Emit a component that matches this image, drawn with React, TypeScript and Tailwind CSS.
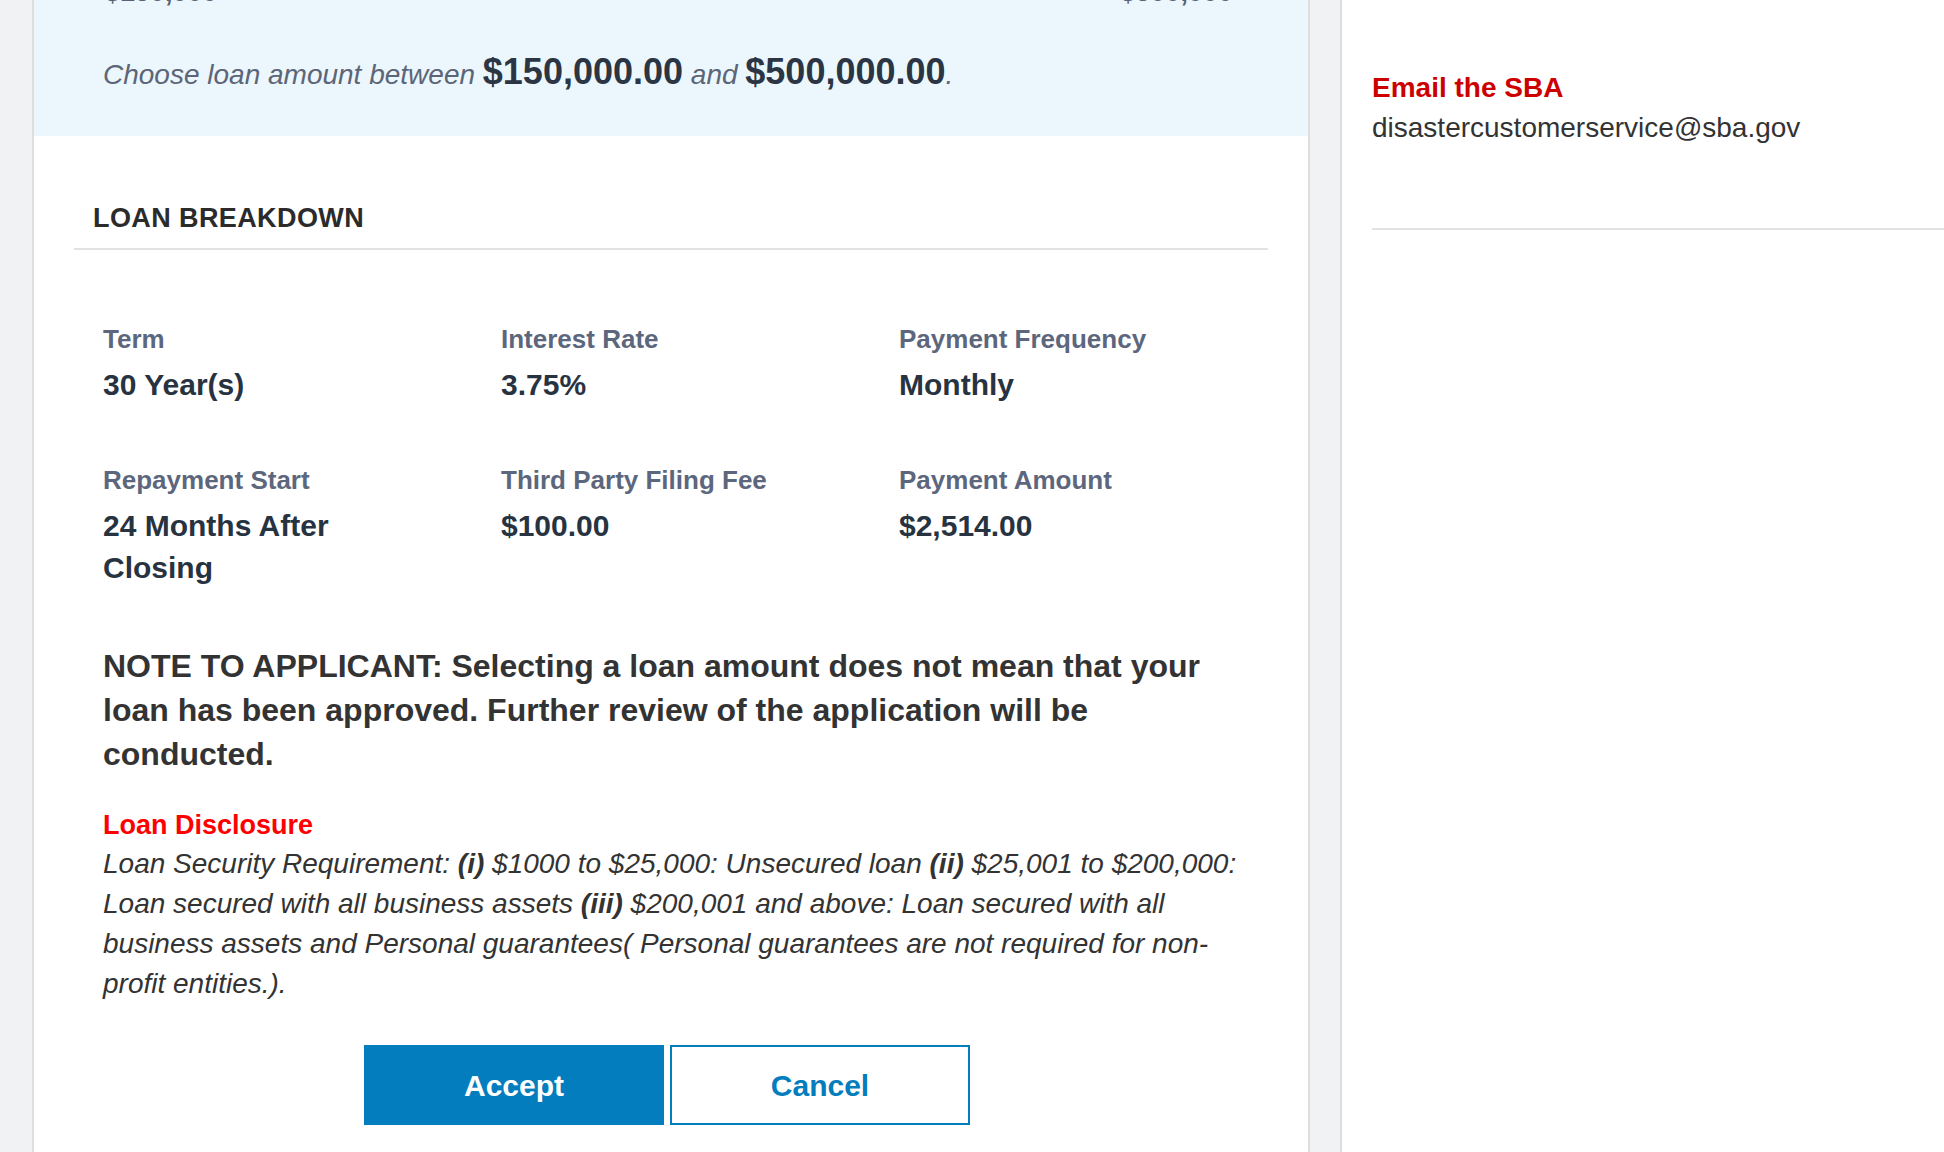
const breakdown = [
  { label: "Term", value: "30 Year(s)" },
  { label: "Interest Rate", value: "3.75%" },
  { label: "Payment Frequency", value: "Monthly" },
  { label: "Repayment Start", value: "24 Months After Closing" },
  { label: "Third Party Filing Fee", value: "$100.00" },
  { label: "Payment Amount", value: "$2,514.00" },
]

function LoanCard() {
  return (
    <div className="w-[1278px] shrink-0 border-x-2 border-[#dedede] bg-white pb-[40px]">
      {/* amount slider area, scrolled mostly out of view */}
      <div className="flex flex-col bg-[#ebf7fd] pb-[37px]">
        <div className="-mt-[24px] flex justify-between pl-[71px] pr-[75px] text-[27px] font-bold leading-[32px] text-[#596273]">
          <span>$150,000</span>
          <span>$500,000</span>
        </div>
        <p className="mt-[40px] pl-[69px] text-[28px] italic leading-[48px] text-[#5d6577]">
          Choose loan amount between{" "}
          <span className="text-[36px] font-bold not-italic text-[#2b3544]">$150,000.00</span> and{" "}
          <span className="text-[36px] font-bold not-italic text-[#2b3544]">$500,000.00</span>.
        </p>
      </div>

      <div className="mx-[40px] mt-[66px] border-b-2 border-[#e2e2e2] pb-[14px]">
        <h2 className="pl-[19px] text-[27px] font-bold uppercase leading-[32px] tracking-[0.4px] text-[#2b2b2b]">
          Loan Breakdown
        </h2>
      </div>

      <div className="pl-[69px] pr-[55px] pt-[73px]">
        <div className="grid grid-cols-[398px_398px_1fr] gap-y-[58px]">
          {breakdown.map((item) => (
            <div key={item.label} className="flex flex-col gap-[9px] pr-[80px]">
              <span className="text-[26px] font-bold leading-[32px] text-[#5c677d]">{item.label}</span>
              <span className="text-[30px] font-bold leading-[42px] text-[#283341]">{item.value}</span>
            </div>
          ))}
        </div>

        <p className="mt-[55px] text-[32px] font-bold leading-[44px] text-[#333333]">
          NOTE TO APPLICANT: Selecting a loan amount does not mean that your loan has been approved.
          Further review of the application will be conducted.
        </p>

        <h3 className="mt-[30px] text-[27px] font-bold leading-[38px] text-[#ff0000]">Loan Disclosure</h3>
        <p className="text-[28px] italic leading-[40px] text-[#333333]">
          Loan Security Requirement: <b>(i)</b> $1000 to $25,000: Unsecured loan <b>(ii)</b> $25,001 to
          $200,000: Loan secured with all business assets <b>(iii)</b> $200,001 and above: Loan secured
          with all business assets and Personal guarantees( Personal guarantees are not required for
          non-profit entities.).
        </p>

        <div className="mt-[41px] flex gap-[6px] pl-[261px]">
          <button className="h-[80px] w-[300px] bg-[#037dbd] text-[30px] font-bold text-white">Accept</button>
          <button className="h-[80px] w-[300px] border-2 border-[#037dbd] bg-white text-[30px] font-bold text-[#037dbd]">
            Cancel
          </button>
        </div>
      </div>
    </div>
  )
}

function ContactPanel() {
  return (
    <div className="flex-1 border-l-2 border-[#dedede] bg-white pl-[30px] pt-[68px]">
      <div className="text-[28px] font-bold leading-[40px] text-[#cd0000]">Email the SBA</div>
      <div className="text-[28px] leading-[40px] text-[#333333]">disastercustomerservice@sba.gov</div>
      <div className="mt-[80px] border-t-2 border-[#e2e2e2]" />
    </div>
  )
}

export default function App() {
  return (
    <div
      className="flex min-h-screen gap-[30px] overflow-hidden bg-[#f1f2f4] pl-[32px]"
      style={{ fontFamily: '"Liberation Sans", Arial, sans-serif' }}
    >
      <LoanCard />
      <ContactPanel />
    </div>
  )
}
